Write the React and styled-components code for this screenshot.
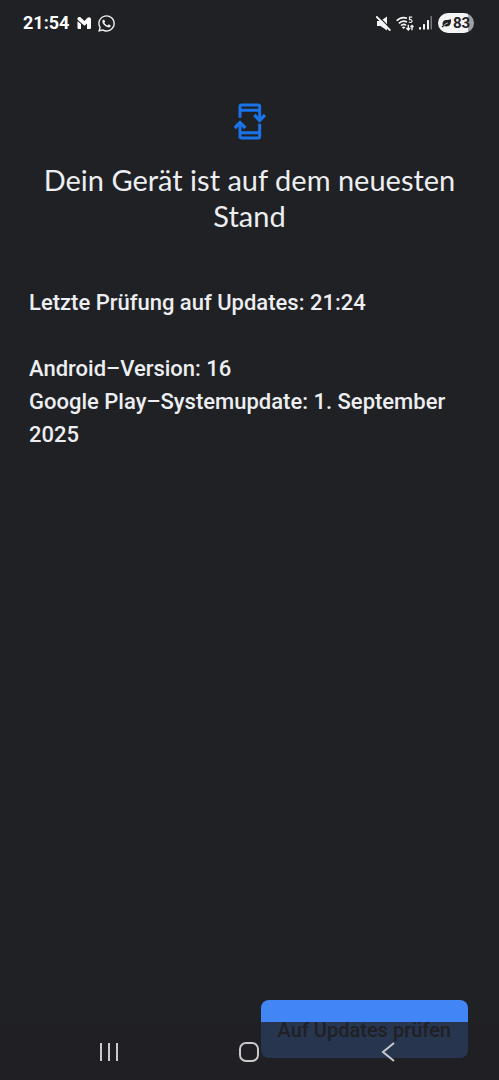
import React from 'react';
import styled, { createGlobalStyle } from 'styled-components';
import { FaWhatsapp } from 'react-icons/fa';

const GlobalStyle = createGlobalStyle`
    * {
        box-sizing:border-box;
    }
    body {
        margin:0;
        background:#202124;
        color:#eceef1;
        font-family:Roboto, sans-serif;
    }
`

const Screen = styled.div`
    display:flex;
    flex-direction:column;
    min-height:100vh;
    background:#202124;
`

const StatusBar = styled.header`
    display:flex;
    align-items:center;
    justify-content:space-between;
    height:46px;
    padding:0 25px 0 23px;
    color:#fff;
`

const StatusGroup = styled.div`
    display:flex;
    align-items:center;
    gap:${({ $gap }) => $gap}px;
`

const Time = styled.time`
    font-size:18px;
    font-weight:700;
    line-height:24px;
    margin-right:2px;
`

const Battery = styled.div`
    display:flex;
    align-items:center;
    gap:1px;
    width:36px;
    height:20px;
    padding-left:3px;
    border-radius:10px;
    background:linear-gradient(to right, #f4f4f4 83%, #a0a1a2 83%);
    color:#202124;
    font-size:15px;
    font-weight:700;
    line-height:20px;
`

const Content = styled.main`
    display:flex;
    flex:1;
    flex-direction:column;
    padding:57px 29px 22px;
`

const Hero = styled.div`
    display:flex;
    flex-direction:column;
    align-items:center;
    gap:22px;
`

const Title = styled.h1`
    margin:0;
    font-family:Lato, sans-serif;
    font-size:29px;
    font-weight:400;
    line-height:36px;
    text-align:center;
`

const Info = styled.div`
    display:flex;
    flex-direction:column;
    gap:33px;
    margin-top:52px;
`

const InfoText = styled.p`
    margin:0;
    font-size:22px;
    font-weight:500;
    line-height:33px;
`

const Actions = styled.div`
    display:flex;
    justify-content:flex-end;
    margin-top:auto;
    padding-right:2px;
`

const UpdateButton = styled.button`
    height:58px;
    padding:2px 17px 0;
    border:0;
    border-radius:8px;
    background:#4285f4;
    color:#202124;
    font-family:inherit;
    font-size:20px;
    font-weight:500;
    cursor:pointer;
`

const NavBar = styled.nav`
    position:fixed;
    right:0;
    bottom:0;
    left:0;
    display:flex;
    justify-content:space-between;
    padding:2px 90px 0 88px;
    background:rgba(32, 33, 36, 0.8);
`

const NavButton = styled.button`
    display:flex;
    align-items:center;
    justify-content:center;
    width:42px;
    height:56px;
    padding:0;
    border:0;
    background:none;
    color:#c8c9cb;
`

function MailIcon() {
    return (
        <svg width="14" height="12" viewBox="0 0 14 12" fill="#fff" aria-hidden="true">
            <path d="M.5 4.200V11a1 1 0 0 0 1 1H4V7z" />
            <path d="M.5 2.800V1.500C.5.500 1.300 0 2.200 0h1L7.500 4 10.500.8C11.800-.5 14 .2 14 2v9a1 1 0 0 1-1 1h-3V6.500L7.500 8.800z" />
        </svg>
    )
}

function MuteIcon() {
    return (
        <svg width="15" height="15" viewBox="0 0 15 15" aria-hidden="true">
            <path d="M1 5h3.500L11 .6v13.800L4.500 10H1z" fill="#f4f4f4" />
            <path d="M2 0l13 13" stroke="#202124" strokeWidth="1.200" />
            <path d="M.8 1l13 13" stroke="#f4f4f4" strokeWidth="1.800" strokeLinecap="round" />
        </svg>
    )
}

function WifiIcon() {
    return (
        <svg width="18" height="15" viewBox="0 0 18 15" fill="none" stroke="#f4f4f4" strokeWidth="1.700" aria-hidden="true">
            <path d="M.7 4.800C3.500 1.700 7.500 1 11 2.200M2.900 7.300C5.200 4.900 8.500 4.600 11 6M5 9.700c1.500-1.400 3.500-1.500 5-.4" />
            <path d="M5.800 11.200 7.600 13l1.800-1.800c-1-.9-2.600-.9-3.600 0z" fill="#f4f4f4" stroke="none" />
            <path d="M16.200 1.200h-2.700v2.400c2.900-.6 3.400 2.900.9 2.900-.6 0-1.100-.2-1.500-.6" strokeWidth="1.200" />
            <path d="M12.300 8.800v5M10.400 12l1.900 1.900 1.900-1.900M16 14.200V9.400M14.500 11l1.500-1.600 1.500 1.600" strokeWidth="1.400" />
        </svg>
    )
}

function SignalIcon() {
    return (
        <svg width="14" height="14" viewBox="0 0 14 14" fill="#f4f4f4" aria-hidden="true">
            <rect x="0" y="11" width="2" height="2.500" rx=".5" />
            <rect x="4" y="8" width="2" height="5.500" rx=".5" />
            <rect x="8" y="4" width="2" height="9.500" rx=".5" />
            <rect x="11.500" y="0" width="1.500" height="13.500" rx=".5" fill="#77787b" />
        </svg>
    )
}

function LeafIcon() {
    return (
        <svg width="11" height="10" viewBox="0 0 11 10" aria-hidden="true">
            <path d="M10 1c.3 4-.8 7.500-4.700 7.500C3 8.500 1.500 8 1.500 5.800 1.500 3.500 3.200 2.200 5 2c2-.2 3.700-.1 5-1z" fill="#202124" />
            <path d="M2.800 7.600C4 6.300 5 5.600 6.800 4.900" fill="none" stroke="#f4f4f4" strokeWidth=".8" />
            <path d="M1 9 2.800 7.500" stroke="#202124" strokeWidth="1.200" />
        </svg>
    )
}

function SystemUpdateIcon() {
    return (
        <svg width="32" height="37" viewBox="0 0 96 111" fill="none" stroke="#1a73e8" strokeWidth="9" aria-hidden="true">
            <path d="M18 44V11q0-5 5-5h49q5 0 5 5v39M18 22h59" />
            <path d="M61 36l16 16 16-16" strokeWidth="10" />
            <path d="M77 62v38q0 5-5 5H23q-5 0-5-5V60M18 89h59" />
            <path d="M2 75l16-16 16 16" strokeWidth="10" />
        </svg>
    )
}

function App() {
    return (
        <Screen>
            <GlobalStyle />
            <StatusBar>
                <StatusGroup $gap={6}>
                    <Time>21:54</Time>
                    <MailIcon />
                    <FaWhatsapp size={19} color="#f4f4f4" />
                </StatusGroup>
                <StatusGroup $gap={5}>
                    <MuteIcon />
                    <WifiIcon />
                    <SignalIcon />
                    <Battery>
                        <LeafIcon />
                        83
                    </Battery>
                </StatusGroup>
            </StatusBar>
            <Content>
                <Hero>
                    <SystemUpdateIcon />
                    <Title>Dein Gerät ist auf dem neuesten Stand</Title>
                </Hero>
                <Info>
                    <InfoText>Letzte Prüfung auf Updates: 21:24</InfoText>
                    <InfoText>
                        Android–Version: 16<br />
                        Google Play–Systemupdate: 1. September 2025
                    </InfoText>
                </Info>
                <Actions>
                    <UpdateButton type="button">Auf Updates prüfen</UpdateButton>
                </Actions>
            </Content>
            <NavBar>
                <NavButton type="button" aria-label="Letzte Apps">
                    <svg width="18" height="20" viewBox="0 0 18 20" stroke="currentColor" strokeWidth="2">
                        <path d="M1 1v18M9 1v18M17 1v18" />
                    </svg>
                </NavButton>
                <NavButton type="button" aria-label="Startbildschirm">
                    <svg width="20" height="20" viewBox="0 0 20 20" fill="none" stroke="currentColor" strokeWidth="2">
                        <rect x="1" y="1" width="18" height="18" rx="6" />
                    </svg>
                </NavButton>
                <NavButton type="button" aria-label="Zurück">
                    <svg width="14" height="20" viewBox="0 0 14 20" fill="none" stroke="currentColor" strokeWidth="2">
                        <path d="M13 1 2 10l11 9" />
                    </svg>
                </NavButton>
            </NavBar>
        </Screen>
    )
}

export default App
